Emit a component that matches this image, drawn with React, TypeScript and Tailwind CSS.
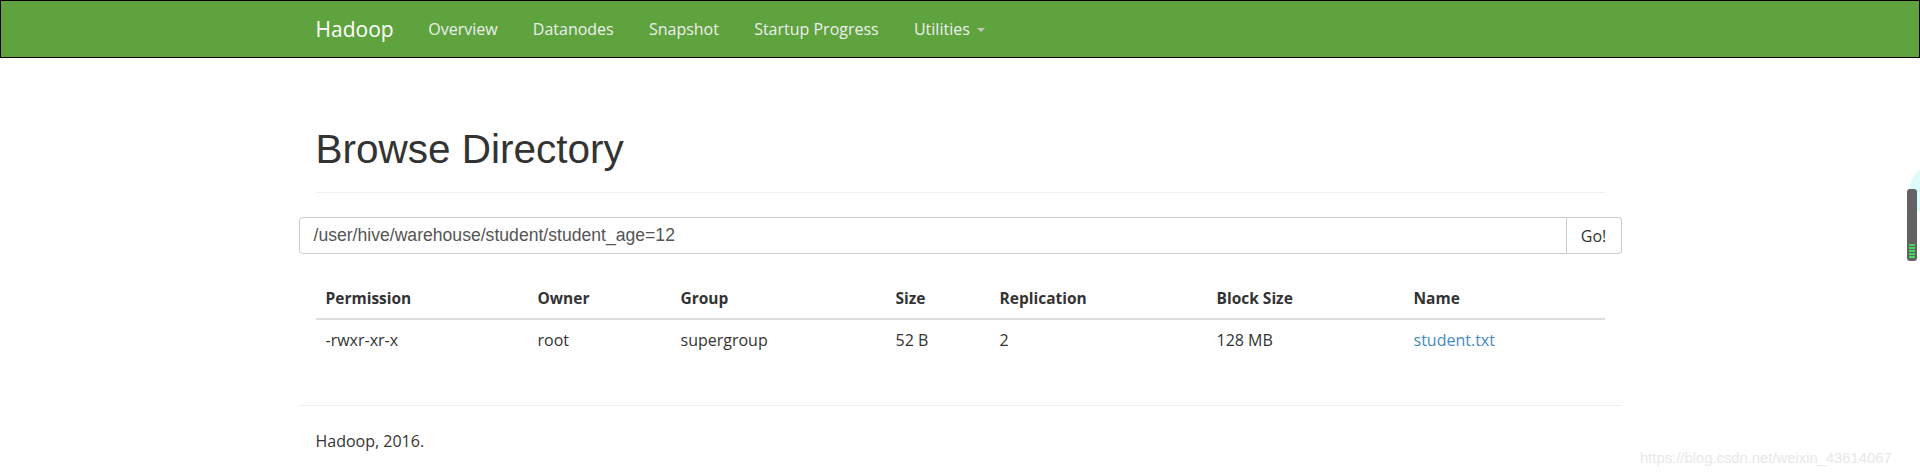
import React from "react";

const cols = [
  "Permission",
  "Owner",
  "Group",
  "Size",
  "Replication",
  "Block Size",
  "Name",
];

const row = ["-rwxr-xr-x", "root", "supergroup", "52 B", "2", "128 MB"];

export default function App() {
  const body = { fontFamily: '"Open Sans", "Noto Sans", sans-serif' };
  const arial = { fontFamily: '"Liberation Sans", Arial, sans-serif' };
  return (
    <div className="relative min-h-[476px] w-full overflow-hidden bg-white text-[#333]" style={body}>
      {/* Navbar */}
      <nav className="h-[58px] border border-black bg-[#5fa33e]">
        <div className="mx-auto flex h-full w-[1323px] items-center">
          <span className="px-[17px] text-[21px] leading-[22px] text-white">Hadoop</span>
          <ul className="flex items-center">
            {["Overview", "Datanodes", "Snapshot", "Startup Progress"].map((l) => (
              <li key={l} className="px-[17.6px] text-[16px] leading-[22px] text-[#eeeeee]">
                {l}
              </li>
            ))}
            <li className="flex items-center px-[17.6px] text-[16px] leading-[22px] text-[#eeeeee]">
              Utilities
              <span className="ml-[7px] mt-[2px] h-0 w-0 border-x-[4px] border-t-[4px] border-x-transparent border-t-[#c4c4c4]" />
            </li>
          </ul>
        </div>
      </nav>

      {/* Main container */}
      <div className="mx-auto w-[1323px]">
        <div className="mx-[17px] border-b border-[#eeeeee] pb-[21px] pt-[69px]">
          <h1 className="text-[40.5px] leading-[44px] text-[#333]" style={arial}>
            Browse Directory
          </h1>
        </div>

        <div className="mt-[24px] flex h-[37px]">
          <div
            className="flex flex-1 items-center rounded-l-[4px] border border-[#cccccc] pl-[14px] text-[17.6px] text-[#555]"
            style={arial}
          >
            /user/hive/warehouse/student/student_age=12
          </div>
          <div className="flex w-[55px] items-center justify-center rounded-r-[4px] border border-l-0 border-[#cccccc] text-[16px] text-[#333]">
            Go!
          </div>
        </div>

        <div className="mx-[17px] mt-[24px]">
          <div className="grid grid-cols-[212px_143px_215px_104px_217px_197px_202px] border-b-2 border-[#dddddd]">
            {cols.map((c) => (
              <div key={c} className="px-[10px] pb-[9px] pt-[9px] text-[15.5px] font-bold leading-[22px] text-[#333]">
                {c}
              </div>
            ))}
          </div>
          <div className="grid grid-cols-[212px_143px_215px_104px_217px_197px_202px]">
            {row.map((c, i) => (
              <div key={i} className="px-[10px] py-[9px] text-[16px] leading-[22px] text-[#333]">
                {c}
              </div>
            ))}
            <div className="px-[10px] py-[9px] text-[16px] leading-[22px] text-[#428bca]">student.txt</div>
          </div>
        </div>

        <div className="mt-[45px] border-t border-[#eeeeee] pt-[24px]">
          <p className="pl-[17px] text-[16px] leading-[22px] text-[#333]">Hadoop, 2016.</p>
        </div>
      </div>

      {/* Browser widget overlay */}
      <div className="absolute left-[1909px] top-[166px] h-[50px] w-[50px] rounded-full bg-[#dcfbfa]" />
      <div className="absolute left-[1907px] top-[189px] flex h-[72px] w-[10px] flex-col justify-end gap-[1px] rounded-[3px] bg-[#636363] px-[2px] pb-[3px]">
        <div className="h-[2px] bg-[#3ddc5a]" />
        <div className="h-[2px] bg-[#3ddc5a]" />
        <div className="h-[2px] bg-[#3ddc5a]" />
        <div className="h-[2px] bg-[#3ddc5a]" />
        <div className="h-[2px] bg-[#3ddc5a]" />
      </div>

      {/* Watermark */}
      <div
        className="absolute left-[1640px] top-[449px] text-[14.8px] leading-[18px] text-[#e8e8e8]"
        style={arial}
      >
        https://blog.csdn.net/weixin_43614067
      </div>
    </div>
  );
}
